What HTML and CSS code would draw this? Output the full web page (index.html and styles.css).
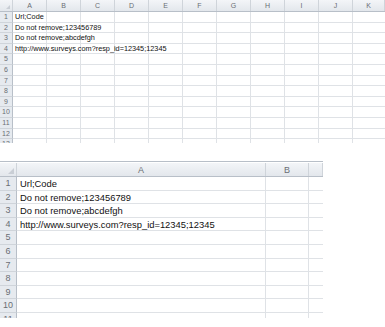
FILE: index.html
```html
<!DOCTYPE html>
<html lang="en">
<head>
    <meta charset="UTF-8">
    <title>Sheet preview</title>
    <link rel="stylesheet" href="styles.css">
</head>
<body>
    <!-- zoomed-out view, columns A to K -->
    <div class="sheet sheet-small">
        <div class="heads">
            <div class="corner"></div>
            <div class="head">A</div>
            <div class="head">B</div>
            <div class="head">C</div>
            <div class="head">D</div>
            <div class="head">E</div>
            <div class="head">F</div>
            <div class="head">G</div>
            <div class="head">H</div>
            <div class="head">I</div>
            <div class="head">J</div>
            <div class="head">K</div>
        </div>
        <div class="row"><div class="num">1</div><div class="cells">Url;Code</div></div>
        <div class="row"><div class="num">2</div><div class="cells">Do not remove;123456789</div></div>
        <div class="row"><div class="num">3</div><div class="cells">Do not remove;abcdefgh</div></div>
        <div class="row"><div class="num">4</div><div class="cells">http://www.surveys.com?resp_id=12345;12345</div></div>
        <div class="row"><div class="num">5</div><div class="cells"></div></div>
        <div class="row"><div class="num">6</div><div class="cells"></div></div>
        <div class="row"><div class="num">7</div><div class="cells"></div></div>
        <div class="row"><div class="num">8</div><div class="cells"></div></div>
        <div class="row"><div class="num">9</div><div class="cells"></div></div>
        <div class="row"><div class="num">10</div><div class="cells"></div></div>
        <div class="row"><div class="num">11</div><div class="cells"></div></div>
        <div class="row"><div class="num">12</div><div class="cells"></div></div>
        <div class="row"><div class="num">13</div><div class="cells"></div></div>
    </div>

    <!-- normal zoom, column A widened -->
    <div class="sheet sheet-wide">
        <div class="split"></div>
        <div class="heads">
            <div class="corner"></div>
            <div class="head">A</div>
            <div class="head">B</div>
            <div class="head"></div>
        </div>
        <div class="row"><div class="num">1</div><div class="cells">Url;Code</div></div>
        <div class="row"><div class="num">2</div><div class="cells">Do not remove;123456789</div></div>
        <div class="row"><div class="num">3</div><div class="cells">Do not remove;abcdefgh</div></div>
        <div class="row"><div class="num">4</div><div class="cells">http://www.surveys.com?resp_id=12345;12345</div></div>
        <div class="row"><div class="num">5</div><div class="cells"></div></div>
        <div class="row"><div class="num">6</div><div class="cells"></div></div>
        <div class="row"><div class="num">7</div><div class="cells"></div></div>
        <div class="row"><div class="num">8</div><div class="cells"></div></div>
        <div class="row"><div class="num">9</div><div class="cells"></div></div>
        <div class="row"><div class="num">10</div><div class="cells"></div></div>
        <div class="row"><div class="num">11</div><div class="cells"></div></div>
    </div>
</body>
</html>
```

FILE: styles.css
```css
body {
    margin: 0;
    background: #fff;
    font-family: "Liberation Sans", Arial, sans-serif;
    color: #111;
}

.sheet {
    position: relative;
    overflow: hidden;
}

.heads {
    display: grid;
    box-sizing: border-box;
    background: linear-gradient(#f3f5f8, #e3e7ec);
    border-bottom: 1px solid #b8bfc8;
}

.head, .corner {
    box-sizing: border-box;
    border-right: 1px solid #cfd4da;
    color: #6a6e74;
    text-align: center;
    overflow: hidden;
}

.corner {
    position: relative;
}

.corner:after {
    content: "";
    position: absolute;
    right: 2px;
    bottom: 2px;
    border-style: solid;
    border-color: transparent #c9ced5 #c9ced5 transparent;
}

.row {
    display: flex;
    box-sizing: border-box;
    border-bottom: 1px solid #dfe2e6;
}

.num {
    box-sizing: border-box;
    flex: none;
    background: #e6eaef;
    border-right: 1px solid #b8bfc8;
    border-bottom: 1px solid #cfd4da;
    margin-bottom: -1px;
    color: #6a6e74;
    text-align: center;
}

.cells {
    flex: 1;
    white-space: nowrap;
    overflow: visible;
}

/* top sheet */
.sheet-small {
    width: 385px;
    height: 143px;
}

.sheet-small .heads {
    grid-template-columns: 13px repeat(10, 34px) 32px;
    height: 12px;
    font-size: 7px;
    line-height: 11px;
}

.sheet-small .corner:after {
    border-width: 2px;
}

.sheet-small .row {
    height: 10.6px;
    font-size: 7.3px;
    line-height: 10px;
}

.sheet-small .num {
    width: 13px;
    font-size: 7px;
}

.sheet-small .cells {
    padding-left: 2px;
    background-image: repeating-linear-gradient(to right, transparent 0 33px, #dfe2e6 33px 34px);
}

/* bottom sheet */
.sheet-wide {
    width: 323px;
    height: 155px;
    margin-top: 18px;
    border-top: 1px solid #b8bfc8;
    padding-top: 1px;
}

.split {
    position: absolute;
    top: -3px;
    left: 112px;
    width: 54px;
    height: 2px;
    border-top: 1px solid #d3d7dc;
}

.sheet-wide .heads {
    grid-template-columns: 17px 249px 43px 14px;
    height: 14px;
    font-size: 9px;
    line-height: 14px;
}

.sheet-wide .corner:after {
    border-width: 3px;
}

.sheet-wide .row {
    height: 13.6px;
    font-size: 9.4px;
    line-height: 13px;
}

.sheet-wide .num {
    width: 17px;
    font-size: 9px;
}

.sheet-wide .cells {
    padding-left: 3px;
    background-image: linear-gradient(#dfe2e6, #dfe2e6), linear-gradient(#dfe2e6, #dfe2e6);
    background-size: 1px 100%;
    background-position: 248px 0, 291px 0;
    background-repeat: no-repeat;
}
```
